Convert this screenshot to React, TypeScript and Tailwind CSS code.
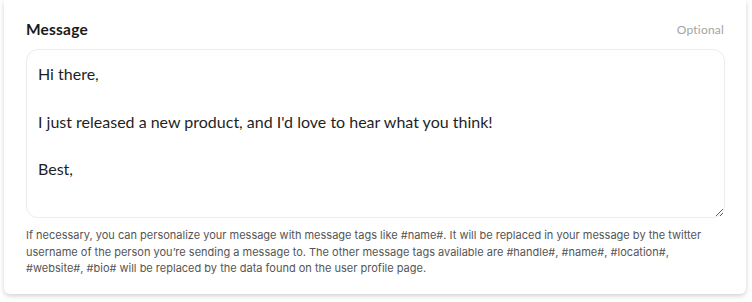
const helpText =
  "If necessary, you can personalize your message with message tags like #name#. It will be replaced in your message by the twitter username of the person you\u2019re sending a message to. The other message tags available are #handle#, #name#, #location#, #website#, #bio# will be replaced by the data found on the user profile page.";

const defaultMessage = "Hi there,\n\nI just released a new product, and I'd love to hear what you think!\n\nBest,";

const App = () => {
  return (
    <div className="w-[752px] h-[302px] bg-white px-1 font-['Lato',sans-serif]">
      <div className="w-[742px] h-[294px] bg-white rounded-b-md shadow-[0_2px_5px_rgba(0,0,0,0.18)] px-[22px] pt-[19px]">
        <div className="flex items-center justify-between h-[22px]">
          <label className="text-[15.5px] font-bold text-[#1a1a1a] tracking-[0.2px]">Message</label>
          <span className="text-[12px] text-[#a3a3a3] tracking-[0.2px]">Optional</span>
        </div>
        <textarea
          className="mt-[8px] block w-[699px] h-[169px] rounded-[12px] border border-[#ececec] px-[11px] py-[12px] text-[16px] leading-[23.75px] text-[#1f1f1f] outline-none resize-y"
          defaultValue={defaultMessage}
        />
        <p className="mt-[9px] w-[690px] font-['Inter',sans-serif] text-[11px] leading-[16.5px] text-[#555]">
          {helpText}
        </p>
      </div>
    </div>
  );
};

export default App;
